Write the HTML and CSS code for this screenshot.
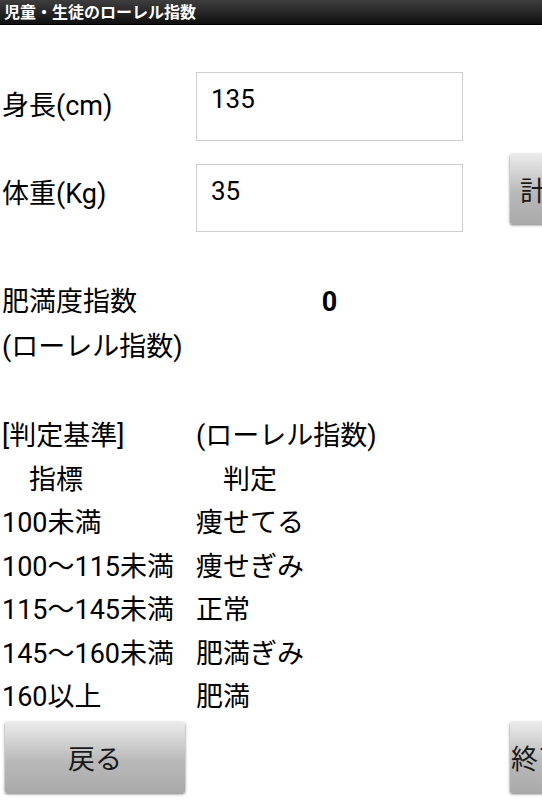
FILE: index.html
```html
<!DOCTYPE html>
<html lang="ja">
<head>
<meta charset="utf-8">
<title>児童・生徒のローレル指数</title>
<link rel="stylesheet" href="styles.css">
</head>
<body>
<div class="screen">
  <header class="titlebar">児童・生徒のローレル指数</header>

  <section class="form">
    <div class="row row-first">
      <div class="label">身長(cm)</div>
      <div class="field">135</div>
    </div>
    <div class="row row-second">
      <div class="label label-offset">体重(Kg)</div>
      <div class="field field-offset">35</div>
      <div class="btn btn-calc">計算</div>
    </div>
  </section>

  <section class="result">
    <div class="result-label">肥満度指数</div>
    <div class="result-value">0</div>
    <div class="result-label">(ローレル指数)</div>
    <div></div>
  </section>

  <section class="criteria">
    <div>[判定基準]</div><div>(ローレル指数)</div>
    <div>　指標</div><div>　判定</div>
    <div>100未満</div><div>痩せてる</div>
    <div>100～115未満</div><div>痩せぎみ</div>
    <div>115～145未満</div><div>正常</div>
    <div>145～160未満</div><div>肥満ぎみ</div>
    <div>160以上</div><div>肥満</div>
  </section>

  <footer class="actions">
    <div class="btn btn-back">戻る</div>
    <div class="btn btn-end">終了</div>
  </footer>
</div>
</body>
</html>
```

FILE: styles.css
```css
html, body {
  margin: 0;
  padding: 0;
  background: #ffffff;
}

.screen {
  width: 542px;
  height: 800px;
  overflow: hidden;
  font-family: Roboto, "Noto Sans CJK JP", sans-serif;
  color: #000;
  font-size: 27px;
}

.titlebar {
  height: 25px;
  line-height: 25px;
  padding-left: 4px;
  font-size: 16px;
  font-weight: bold;
  color: #fff;
  background: linear-gradient(#3e3e3e, #101010);
  border-bottom: 1px solid #000;
  box-sizing: border-box;
}

.form {
  padding-top: 47px;
}

.row {
  display: flex;
  white-space: nowrap;
}

.row-first {
  align-items: center;
  height: 69px;
}

.row-second {
  margin-top: 13px;
  align-items: flex-start;
}

.label {
  width: 196px;
  flex: none;
  padding-left: 2px;
  padding-bottom: 7px;
  box-sizing: border-box;
}

.label-offset {
  margin-top: 10px;
  height: 68px;
  display: flex;
  align-items: center;
  padding-bottom: 14px;
}

.field {
  width: 267px;
  height: 69px;
  flex: none;
  box-sizing: border-box;
  border: 1px solid #cfcfcf;
  box-shadow: inset 0 0 1px #e4e4e4;
  padding: 10px 0 0 14px;
  line-height: 32px;
  font-size: 26px;
  background: #fff;
}

.field-offset {
  margin-top: 10px;
  height: 68px;
}

.btn {
  flex: none;
  box-sizing: border-box;
  background: linear-gradient(#ebebeb, #b9b9b9 55%, #a9a9a9);
  box-shadow: 0 1px 3px rgba(0, 0, 0, 0.55);
  border-radius: 2px;
  display: flex;
  align-items: center;
  color: #1a1a1a;
  font-size: 27px;
}

.btn-calc {
  margin-left: 47px;
  width: 90px;
  height: 70px;
  padding-left: 10px;
}

.result {
  margin-top: 48px;
  display: grid;
  grid-template-columns: 196px 267px;
  line-height: 45px;
}

.result-label {
  padding-left: 2px;
  white-space: nowrap;
}

.result-value {
  text-align: center;
  font-weight: bold;
}

.criteria {
  margin-top: 45px;
  display: grid;
  grid-template-columns: 194px auto;
  line-height: 43.5px;
  padding-left: 2px;
  white-space: nowrap;
}

.actions {
  margin-top: 2px;
  display: flex;
  padding-left: 5px;
}

.btn-back {
  width: 180px;
  height: 71px;
  justify-content: center;
}

.btn-end {
  margin-left: 325px;
  width: 90px;
  height: 71px;
  padding-left: 1px;
}
```
